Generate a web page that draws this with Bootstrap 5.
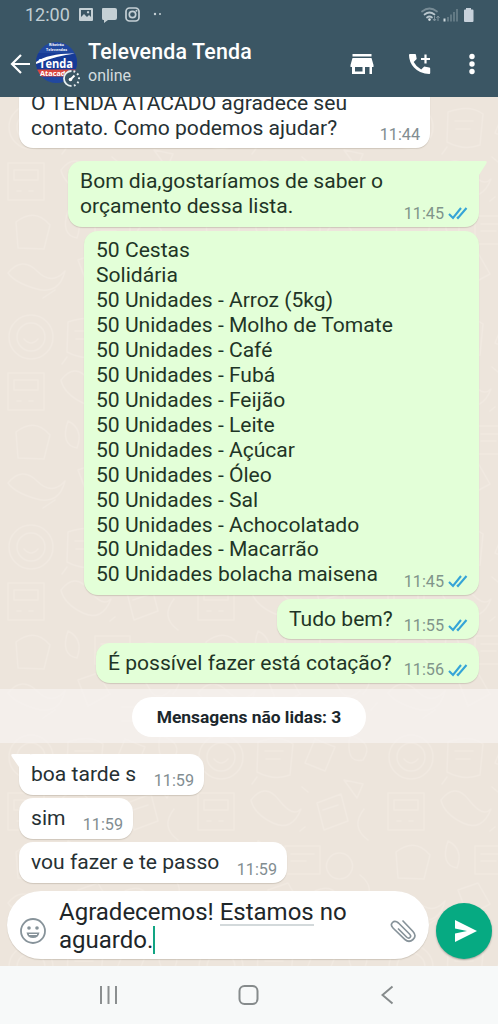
<!DOCTYPE html>
<html lang="pt-BR">
<head>
<meta charset="utf-8">
<meta name="viewport" content="width=device-width, initial-scale=1">
<title>Televenda Tenda</title>
<link href="https://cdn.jsdelivr.net/npm/bootstrap@5.3.0/dist/css/bootstrap.min.css" rel="stylesheet">
<style>
body{font-family:Roboto,"Liberation Sans",sans-serif;width:498px;height:1024px;overflow:hidden;background:#ece4db;color:#1d2b2c}
svg{display:block;flex:none}
.top-area{height:97px;background:#3b5664;color:#fff}
.status-row{height:30px;padding:0 24px 0 25px;color:#c0cdd3}
.clock{font-size:18px;line-height:30px;width:54px;white-space:nowrap}
.chat-head{height:67px;padding:0 23px 0 10px}
.avatar-wrap{width:46px;height:46px;margin-left:4px}
.contact-block{margin-left:7px}
.contact-name{font-size:21.4px;line-height:25px;font-weight:500;letter-spacing:.16px;white-space:nowrap;margin-top:0}
.contact-state{font-size:16px;line-height:24px;color:#d3dcdf}
.chat-area{height:869px;overflow:hidden;position:relative}
.doodles{position:absolute;inset:0}
.bubble{position:relative;border-radius:14px;padding:7.8px 10px 7.8px 12px;font-size:21.08px;line-height:24.92px;background:#fff;width:fit-content;box-shadow:0 1px 1px rgba(90,80,60,.2);margin:0 0 3.7px 19px;white-space:nowrap;color:#263033}
.bubble.sent{background:#e3ffd8;margin-left:auto;margin-right:19px;padding-right:11px;color:#1f3526}
.stamp{font-size:16.2px;line-height:18px;color:#828d91;margin-bottom:-3.5px}
.sent .stamp{color:#80948a}
.sent .stamp+svg{margin-bottom:-1px}
.tail{position:absolute;top:0}
.unread-band{height:54px;background:rgba(247,245,242,.65);margin-top:5.6px;margin-bottom:11px;padding-top:1px}
.unread-pill{width:234px;height:40px;font-size:17.4px;font-weight:700;color:#1b272c;background:#fff}
.compose{padding:0 6px 6px 7px;margin-top:8px}
.input-box{width:422px;height:68px;border-radius:34px;padding:0 13px;box-shadow:0 1px 1px rgba(90,80,60,.2)}
.draft{font-size:24px;line-height:28px;color:#1e2629;white-space:nowrap;margin:3px 0 0 13px}
.draft u{text-decoration:none;box-shadow:0 2px #d3d9db;display:inline-block;line-height:24px}
.caret{display:inline-block;width:2px;height:28px;background:#12a583;vertical-align:0;margin:-4px 0 -6px 0}
.send-btn{width:56px;height:56px;background:#06aa82;border:0;box-shadow:0 1px 2px rgba(0,0,0,.3)}
.sys-nav{height:58px;background:#f7f9f9;padding:0 104px 0 99px}
</style>
</head>
<body>
<header class="top-area">
  <div class="status-row d-flex align-items-center">
    <span class="clock">12:00</span>
    <svg width="82" height="16" viewBox="0 0 82 16" fill="#c5d0d5"><path fill-rule="evenodd" d="M1 1h12q1 0 1 1v11q0 1-1 1H1q-1 0-1-1V2q0-1 1-1zm1 2v7l3-3 3 3 2-2 2 2V3zm7 1a1.200 1.200 0 1 0 .1 0zM24 1h12q2 0 2 2v8q0 2-2 2h-7l-4 3v-3h-1q-1 0-1-2V2q0-1 1-1z"/><g fill="none" stroke="#c5d0d5" stroke-width="1.700"><rect x="47" y="1" width="13" height="13" rx="3.500"/><circle cx="53.500" cy="7.500" r="3.200"/></g><circle cx="57.500" cy="3.800" r="1"/><circle cx="76" cy="7" r="1.200"/><circle cx="81" cy="7" r="1"/></svg>
    <svg class="ms-auto" width="53" height="17" viewBox="0 0 53 17"><g fill="none" stroke="#b9c6cd" stroke-linecap="round" stroke-width="1.700"><path d="M1 4.500q7.500-6 15 0" stroke="#778b95"/><path d="M3.500 7.500q5-4 10 0M6 10.500q2.500-2 5 0"/></g><circle cx="8.500" cy="12.600" r="1.300" fill="#d7e0e4"/><path d="M13.500 9v5m-1.500-2 1.500 2 1.500-2M17 14V9m-1.500 2L17 9l1.500 2" fill="none" stroke="#80939d"/><path d="M23.500 11.500v3" stroke="#ced8dd" stroke-width="2"/><path d="M27 10v4.500M30 7.500v7M33 5v9.500M36 2v12.500" stroke="#70858f" stroke-width="1.500"/><path d="M45 1h5v1.500h1.500q1 0 1 1V14q0 1-1 1H44q-1 0-1-1V3.500q0-1 1-1h1z" fill="#c7d1db"/></svg>
  </div>
  <div class="chat-head d-flex align-items-center">
    <svg width="21" height="20" viewBox="0 0 21 20" fill="none" stroke="#fff" stroke-width="2.200"><path d="M20 10H2M11 1 2 10l9 9"/></svg>
    <div class="avatar-wrap">
      <svg width="46" height="46" viewBox="0 0 46 46"><defs><clipPath id="disc"><circle cx="21.500" cy="21.500" r="20.500"/></clipPath></defs><g clip-path="url(#disc)"><path fill="#2148a0" d="M0 0h46v46H0z"/><path fill="#173b97" d="M0 12h46v17H0z"/><path fill="#d9473f" d="M0 28.500h46v7H0z"/><path d="M1 21Q14 12 40 12.500Q22 14.500 1 23z" fill="#fff"/></g><g font-family="Open Sans,sans-serif" font-weight="700" fill="#fff"><text x="14" y="4.800" font-size="3.600" textLength="15">Ribeirão</text><text x="11" y="9.800" font-size="3.600" textLength="21">Televendas</text><text x="4" y="26.500" font-size="11.500" textLength="34" lengthAdjust="spacingAndGlyphs">Tenda</text><text x="5" y="34.500" font-size="6.500" textLength="30" lengthAdjust="spacingAndGlyphs">Atacado</text></g><circle cx="36.500" cy="37.500" r="8.500" fill="#3b5664"/><path d="M36.500 30a7.500 7.500 0 0 0 0 15" fill="none" stroke="#e9eff1" stroke-width="1.800"/><path d="M36.500 30a7.500 7.500 0 0 1 0 15" fill="none" stroke="#e9eff1" stroke-width="2" stroke-dasharray="1.800 2.500" stroke-dashoffset="-2"/><path d="m35 39 4.500-4.500" stroke="#fff" stroke-width="2"/><circle cx="35.500" cy="38.500" r="1.800" fill="#fff"/></svg>
    </div>
    <div class="contact-block"><div class="contact-name">Televenda Tenda</div><div class="contact-state">online</div></div>
    <div class="d-flex align-items-center ms-auto">
      <svg width="24" height="22" viewBox="0 0 24 22" fill="#fff"><path fill-rule="evenodd" d="M2.500 1h19v2.500h-19zM2.500 5h19L23.500 12v2H22v7h-2.500v-7H15v7H2v-7H.5v-2zM5 14v4.500h7.500V14z"/></svg>
      <svg style="margin-left:33px" width="26" height="26" viewBox="0 0 26 26" fill="#fff"><path d="M3 3h5q1 0 1 1l.7 4-3 3q2.600 5 7.500 7.500l3-3 5 1q1 .2 1 1v4.500q0 1-1 1Q13 23 7 16.500 2 11 2 4q0-1 1-1z"/><path d="M18.500 3.500v9M14 8h9" stroke="#fff" stroke-width="2.200"/></svg>
      <svg style="margin-left:36px" width="6" height="22" viewBox="0 0 6 22" fill="#fff"><circle cx="3" cy="3.500" r="2.700"/><circle cx="3" cy="11" r="2.700"/><circle cx="3" cy="18.500" r="2.700"/></svg>
    </div>
  </div>
</header>
<svg width="0" height="0" class="position-absolute"><symbol id="ticks" viewBox="0 0 20 14"><path d="m1 8 4 4L13 2M9 11l1 1 8.500-10" fill="none" stroke="#35a4d7" stroke-width="2.100"/></symbol></svg>
<main class="chat-area">
  <svg class="doodles" width="498" height="869"><defs><pattern id="wall" width="190" height="210" patternUnits="userSpaceOnUse"><g fill="none" stroke="#f3ece4" stroke-width="1.500" stroke-linecap="round" stroke-linejoin="round"><circle cx="31" cy="30" r="22"/><circle cx="31" cy="30" r="14"/><path d="M24 32q7 8 14 0M68 15q22-8 35 2l-3 31q-16 6-33-3zM75 24h18M76 32h14M125 12l20 8-10 24-20-8zM160 8q25 8 13 25-18 4-13-25M154 53l19 4-6 14zM8 66h36v37H8zM14 73h24v10H14zM17 94h4M29 94h4M61 73q14-18 28 0t22 9q-9 23-28 14t-22-23zM127 76l24-9 7 27-24 9zM133 83l15-5M174 82q-14 18 4 31M16 125q19-15 34 3l-6 24-26-1zM68 114q16 8 9 27-17-3-9-27M95 119h35v28H95zM101 127h23M101 134h15M149 126a13 13 0 1 0 1 0M170 148q17 13 3 29M8 176q14-17 29-2t28 0q-6 24-28 18T8 176M78 163l20-7 12 21-22 12zM125 164q17-8 24 7t21 3M122 190h29v14h-29M43 201l12-8M62 57l5-7M112 60l6 5M110 104l5-4M181 193l6-7"/></g></pattern></defs><rect width="498" height="869" fill="#ede5dc"/><rect width="498" height="869" fill="url(#wall)" opacity=".6"/></svg>
  <div class="position-relative">
    <div class="bubble d-flex align-items-end" style="width:411px;margin-top:-14px;margin-bottom:13px"><div>O TENDA ATACADO agradece seu<br>contato. Como podemos ajudar?</div><span class="stamp ms-auto">11:44</span></div>
    <div class="bubble sent d-flex align-items-end" style="width:411px"><div>Bom dia,gostaríamos de saber o<br>orçamento dessa lista.</div><span class="stamp ms-auto">11:45</span><svg class="ms-1" width="20" height="14"><use href="#ticks"/></svg><svg class="tail" style="right:-8px" width="22" height="16"><path d="M0 0h20q3 0 1 3l-7 11v2H0z" fill="#e3ffd8"/></svg></div>
    <div class="bubble sent d-flex align-items-end" style="width:395px"><div>50 Cestas<br>Solidária<br>50 Unidades - Arroz (5kg)<br>50 Unidades - Molho de Tomate<br>50 Unidades - Café<br>50 Unidades - Fubá<br>50 Unidades - Feijão<br>50 Unidades - Leite<br>50 Unidades - Açúcar<br>50 Unidades - Óleo<br>50 Unidades - Sal<br>50 Unidades - Achocolatado<br>50 Unidades - Macarrão<br>50 Unidades bolacha maisena</div><span class="stamp ms-auto">11:45</span><svg class="ms-1" width="20" height="14"><use href="#ticks"/></svg></div>
    <div class="bubble sent d-flex align-items-end" style="width:202px"><div>Tudo bem?</div><span class="stamp ms-auto">11:55</span><svg class="ms-1" width="20" height="14"><use href="#ticks"/></svg></div>
    <div class="bubble sent d-flex align-items-end" style="width:383px"><div>É possível fazer está cotação?</div><span class="stamp ms-auto">11:56</span><svg class="ms-1" width="20" height="14"><use href="#ticks"/></svg></div>
    <div class="unread-band d-flex align-items-center justify-content-center"><div class="unread-pill rounded-pill d-flex align-items-center justify-content-center">Mensagens não lidas: 3</div></div>
    <div class="bubble d-flex align-items-end" style="width:185px"><div>boa tarde s</div><span class="stamp ms-auto">11:59</span><svg class="tail" style="left:-8px" width="19" height="16"><path d="M19 0H2q-3 0-1 3l7 10v3h11z" fill="#fff"/></svg></div>
    <div class="bubble d-flex align-items-end" style="width:114px"><div>sim</div><span class="stamp ms-auto">11:59</span></div>
    <div class="bubble d-flex align-items-end" style="width:268px"><div>vou fazer e te passo</div><span class="stamp ms-auto">11:59</span></div>
    <div class="compose d-flex">
      <div class="input-box bg-white d-flex align-items-center">
        <svg style="margin-top:13px" width="26" height="26" viewBox="0 0 26 26"><circle cx="13" cy="13" r="12" fill="none" stroke="#87939a" stroke-width="1.800"/><circle cx="9" cy="10" r="1.800" fill="#87939a"/><circle cx="17" cy="10" r="1.800" fill="#87939a"/><path d="M6.500 14.500h13q-1 5.500-6.500 5.500t-6.500-5.500z" fill="#87939a"/><path d="M9 16.500h8" stroke="#fff"/></svg>
        <div class="draft">Agradecemos! <u>Estamos</u> no<br>aguardo.<span class="caret"></span></div>
        <svg class="ms-auto" style="margin-top:13px" width="26" height="26" viewBox="0 0 26 26" fill="none" stroke="#87939a" stroke-width="1.700" stroke-linecap="round"><path d="M13 3l10 10.500q4 4.500 0 8t-8 0L3 10q-3-3-.5-5.500t6 .5l11 11q2 2 .5 3.500t-3.500-.5L8.500 11"/></svg>
      </div>
      <button class="send-btn rounded-circle d-flex align-items-center justify-content-center p-0 ms-auto" style="margin-top:12.500px" aria-label="Enviar"><svg style="margin-left:4px" width="24" height="24" viewBox="0 0 24 24"><path d="M1 1l22 11L1 23v-8.500L13 12 1 9.500z" fill="#fff"/></svg></button>
    </div>
  </div>
</main>
<nav class="sys-nav d-flex align-items-center justify-content-between position-relative">
  <svg width="19" height="20"><path d="M2 1v18M9.500 1v18M17 1v18" stroke="#8b8f90" stroke-width="2"/></svg>
  <svg style="margin-left:-3px" width="21" height="20"><rect x="1.500" y="1" width="18" height="18" rx="5" fill="none" stroke="#868b8c" stroke-width="2"/></svg>
  <svg width="13" height="20"><path d="m11.500 1.500-10 8.500 10 8.500" fill="none" stroke="#868b8c" stroke-width="2"/></svg>
</nav>
<script src="https://cdn.jsdelivr.net/npm/bootstrap@5.3.0/dist/js/bootstrap.bundle.min.js"></script>
</body>
</html>
